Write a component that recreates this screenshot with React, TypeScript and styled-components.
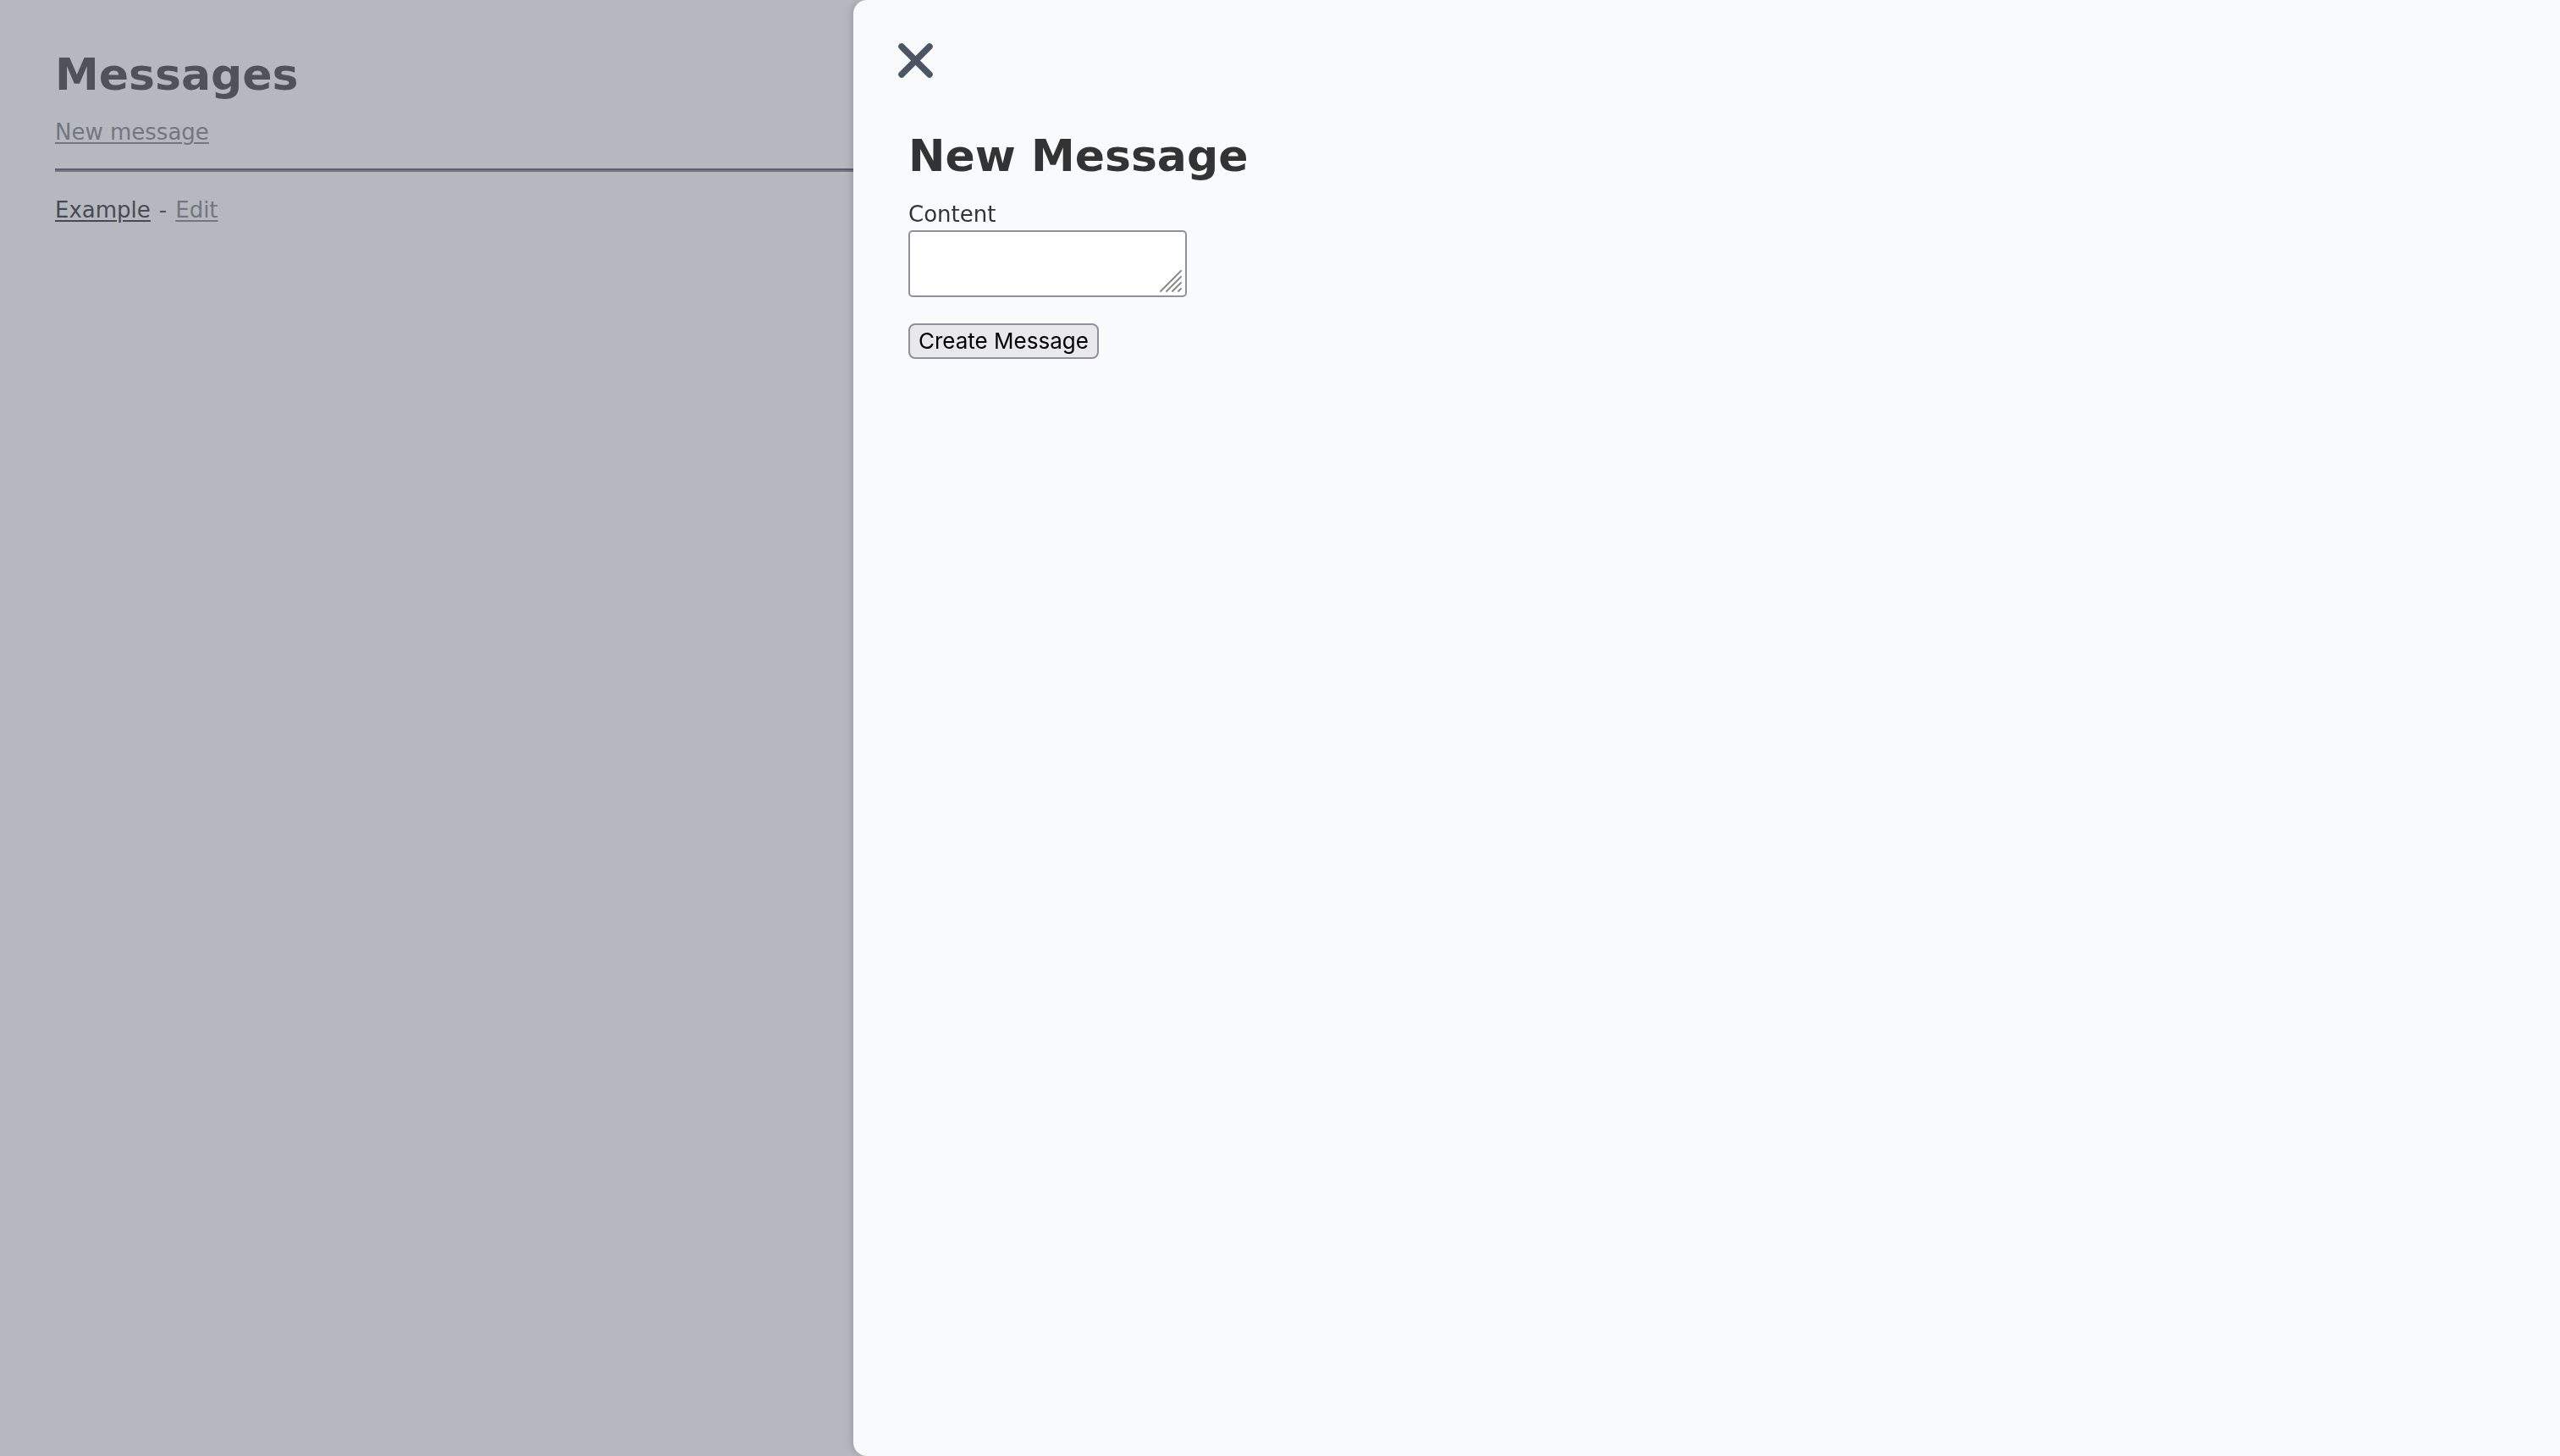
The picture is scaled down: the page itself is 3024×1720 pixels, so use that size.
import React from "react";
import styled, { createGlobalStyle } from "styled-components";

const Global = createGlobalStyle`
  html, body {
    margin: 0;
    padding: 0;
    background: #ffffff;
  }
  body {
    font-family: "DejaVu Sans", Verdana, sans-serif;
    color: #333333;
  }
  * { box-sizing: border-box; }
`;

const Page = styled.main`
  padding: 58px 0 0 65px;
  min-height: 100vh;
`;

const Title = styled.h1`
  margin: 0;
  font-size: 52px;
  line-height: 60px;
  font-weight: 700;
  color: #333333;
`;

const PageLink = styled.a<{ $tone: "muted" | "strong" }>`
  font-size: 26px;
  line-height: 30px;
  color: ${(p) => (p.$tone === "muted" ? "#777b82" : "#1f2227")};
  text-decoration: underline;
  text-underline-offset: 3px;
  text-decoration-thickness: 2px;
`;

const NewLinkRow = styled.div`
  margin-top: 23px;
  height: 30px;
  display: flex;
`;

const Rule = styled.hr`
  margin: 28px 0 0 0;
  height: 4px;
  border: none;
  border-top: 2px solid #4a4f58;
  border-bottom: 2px solid #7a7e86;
`;

const ItemRow = styled.div`
  margin-top: 30px;
  display: flex;
  align-items: baseline;
  gap: 10px;
  font-size: 26px;
  line-height: 30px;
  color: #333333;
`;

const Overlay = styled.div`
  position: fixed;
  inset: 0;
  background: rgba(107, 114, 128, 0.5);
`;

const Drawer = styled.aside`
  position: fixed;
  top: 0;
  right: 0;
  bottom: 0;
  width: 66.6667%;
  background: #f9fafb;
  border-radius: 16px 0 0 16px;
  box-shadow: -3px 0 8px rgba(0, 0, 0, 0.12);
  padding: 51px 64px 0 65px;
  display: flex;
  flex-direction: column;
  align-items: flex-start;
`;

const CloseButton = styled.button`
  margin-left: -12px;
  padding: 0;
  border: none;
  background: transparent;
  width: 41px;
  height: 41px;
  display: flex;
  color: #4b5563;
  cursor: pointer;
`;

const DrawerTitle = styled.h2`
  margin: 62px 0 0 0;
  font-size: 52px;
  line-height: 60px;
  font-weight: 700;
  color: #333333;
`;

const Form = styled.form`
  display: flex;
  flex-direction: column;
  align-items: flex-start;
`;

const Label = styled.label`
  margin-top: 24px;
  font-size: 26px;
  line-height: 30px;
  color: #333333;
`;

const FieldWrap = styled.div`
  position: relative;
  margin-top: 4px;
  display: flex;
`;

const TextArea = styled.textarea`
  width: 329px;
  height: 79px;
  border: 2px solid #8f8f9d;
  border-radius: 5px;
  background: #ffffff;
  resize: none;
  padding: 4px;
  font-family: "DejaVu Sans Mono", monospace;
  font-size: 26px;
  outline: none;
`;

const Grip = styled.svg`
  position: absolute;
  right: 6px;
  bottom: 6px;
  width: 26px;
  height: 26px;
  pointer-events: none;
`;

const SubmitButton = styled.button`
  margin-top: 31px;
  height: 42px;
  padding: 4px 10px;
  border: 2px solid #8f8f9d;
  border-radius: 8px;
  background: #e9e9ed;
  color: #000000;
  font-family: Inter, "Noto Sans", sans-serif;
  font-size: 26px;
  line-height: 30px;
  cursor: pointer;
`;

export default function App() {
  return (
    <>
      <Global />
      <Page>
        <Title>Messages</Title>
        <NewLinkRow>
          <PageLink $tone="muted" href="#">New message</PageLink>
        </NewLinkRow>
        <Rule />
        <ItemRow>
          <PageLink $tone="strong" href="#">Example</PageLink>
          <span>-</span>
          <PageLink $tone="muted" href="#">Edit</PageLink>
        </ItemRow>
      </Page>
      <Overlay />
      <Drawer>
        <CloseButton aria-label="Close">
          <svg width="41" height="41" viewBox="0 0 41 41" fill="none">
            <path
              d="M4 4 L37 37 M37 4 L4 37"
              stroke="currentColor"
              strokeWidth="7.5"
              strokeLinecap="round"
            />
          </svg>
        </CloseButton>
        <DrawerTitle>New Message</DrawerTitle>
        <Form onSubmit={(e) => e.preventDefault()}>
          <Label htmlFor="content">Content</Label>
          <FieldWrap>
            <TextArea id="content" />
            <Grip viewBox="0 0 26 26">
              <path
                d="M1 25 L25 1 M8 25 L25 8 M15 25 L25 15 M22 25 L25 22"
                stroke="#8a8a8a"
                strokeWidth="2"
                strokeLinecap="round"
              />
            </Grip>
          </FieldWrap>
          <SubmitButton type="submit">Create Message</SubmitButton>
        </Form>
      </Drawer>
    </>
  );
}
